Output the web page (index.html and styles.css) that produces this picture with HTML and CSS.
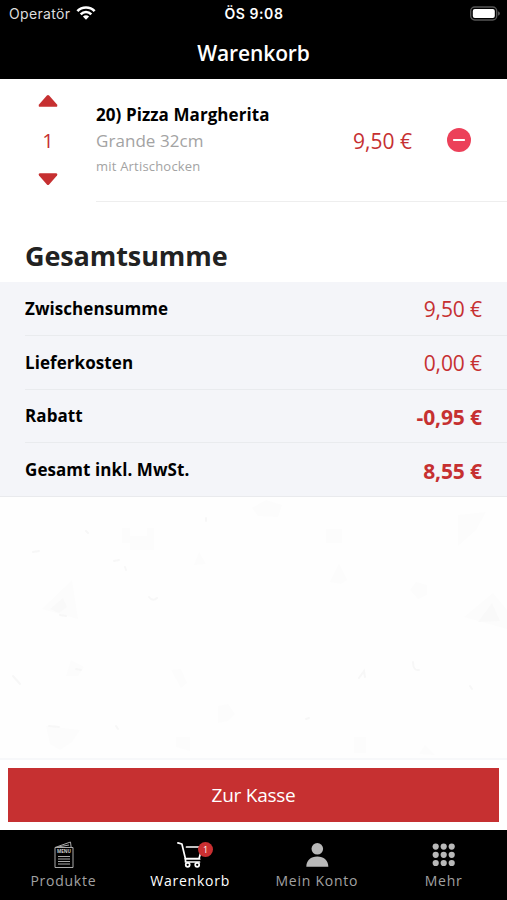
FILE: index.html
```html
<!DOCTYPE html>
<html lang="de">
<head>
<meta charset="utf-8">
<title>Warenkorb</title>
<link rel="stylesheet" href="styles.css">
</head>
<body>
<div class="app">
  <header class="top">
    <div class="status">
      <div class="carrier"><span>Operatör</span>
        <svg width="20" height="16" viewBox="0 0 20 16" fill="none" stroke="#fff" stroke-width="2.6"><path d="M1.4 5.2C6 .2 14 .2 18.6 5.2M4.7 8.4C7.7 5.2 12.3 5.2 15.3 8.4"/><path d="M10 13.8 6.9 10.6Q10 8 13.1 10.6Z" fill="#fff" stroke="none"/></svg>
      </div>
      <div class="clock">ÖS 9:08</div>
      <div class="battery">
        <svg width="32" height="16" viewBox="0 0 32 16"><rect x="1.7" y="1" width="26" height="13" rx="4" fill="none" stroke="#555" stroke-width="1.4"/><rect x="3.8" y="3" width="22" height="9" rx="2" fill="#fff"/><path d="M29 5.3q2 .7 2 2.2t-2 2.2z" fill="#555"/></svg>
      </div>
    </div>
    <h1 class="title">Warenkorb</h1>
  </header>
  <section class="item">
    <div class="stepper">
      <svg width="20" height="14" viewBox="0 0 20 14"><path d="M8.9 1.5Q10 .5 11.1 1.5L19 10.4Q20 12.5 18 12.8H2Q0 12.5 1 10.4Z" fill="#c63031"/></svg>
      <span class="qty">1</span>
      <svg width="20" height="14" viewBox="0 0 20 14"><path d="M8.9 12.5Q10 13.5 11.1 12.5L19 3.6Q20 1.5 18 1.2H2Q0 1.5 1 3.6Z" fill="#c63031"/></svg>
    </div>
    <div class="body">
      <div class="desc">
        <div class="name">20) Pizza Margherita</div>
        <div class="size">Grande 32cm</div>
        <div class="extra">mit Artischocken</div>
      </div>
      <div class="price">9,50 €</div>
      <svg class="remove" width="24" height="24" viewBox="0 0 24 24"><circle cx="12" cy="12" r="12" fill="#ec4059"/><path d="M6.8 12h10.4" stroke="#fff" stroke-width="1.8" stroke-linecap="round"/></svg>
    </div>
  </section>
  <h2 class="heading">Gesamtsumme</h2>
  <dl class="totals">
    <div class="row"><dt>Zwischensumme</dt><dd>9,50 €</dd></div>
    <div class="row"><dt>Lieferkosten</dt><dd>0,00 €</dd></div>
    <div class="row"><dt>Rabatt</dt><dd class="strong">-0,95 €</dd></div>
    <div class="row"><dt>Gesamt inkl. MwSt.</dt><dd class="strong">8,55 €</dd></div>
  </dl>
  <div class="backdrop">
    <svg width="507" height="262" viewBox="0 7 507 262" fill="#fcfcfc">
      <path d="M72 90 42 119 78 129ZM493 103 464 127 507 139V120ZM46 236 80 240 72 252 60 260 50 254ZM458 25 486 22 476 40 458 56ZM122 38h8v8h17v-8h7v22h-24v-7h-8ZM252 18l14-8 16 5-4 12-20-1ZM326 39h16v14h-16ZM330 92l9-18 8 16-6 4ZM410 100l6-8 11 3v10l-9 4ZM218 216l10-2 7 10-7 7-10 2ZM66 186l5-16 13 7-6 9ZM171 180l10-1 6 14-6 5ZM354 247h12v16h-12ZM176 247h14v14l-14-4ZM419 264l6-9 10 10ZM194 75l5-13 7 12Z"/>
      <g fill="none" stroke="#f7f7f7" stroke-width="2" stroke-linecap="round"><path d="M33 62l6-1M114 71l5-1M125 77l1 3M149 107q4 5 8 1M60 125l6 1M359 188l5-7 1 6M413 172q0 9 6 8M116 236l2 3M49 236l10 1M13 186l7 8M86 41l2 2M206 28v3M306 229l3-1M470 196l2 3M76 179l5 1"/></g>
      <path d="M50 119l13-11 4 9-8 6zM478 132l14-19 8 18z" fill="#f9f9f9"/>
    </svg>
  </div>
  <div class="checkout"><button class="pay" type="button">Zur Kasse</button></div>
  <nav class="tabs">
    <a class="tab">
      <svg width="26" height="30" viewBox="0 0 26 30" fill="none" stroke="#aaa" stroke-width="1"><path d="M5 8.5h18v20H5zM5 8.5 20.5 3l.6 5M8 8 19 6M8 17.5h12M8 20h12M8 22.5h12M8 25h12"/><text class="menu" x="14" y="14.3" text-anchor="middle">MENU</text></svg>
      <span>Produkte</span>
    </a>
    <a class="tab active">
      <span class="cart">
        <svg width="28" height="30" viewBox="0 0 28 30" fill="none" stroke="#fff" stroke-width="1.7" stroke-linecap="round" stroke-linejoin="round"><path d="M1.9 3.9 5.9 5 9.5 20H23.7M10.5 8H23.5M9 19.7H23L25.5 10.5M9.5 20V23H23.5"/><circle cx="11.7" cy="25.8" r="2"/><circle cx="21.2" cy="25.8" r="2"/></svg>
        <span class="badge">1</span>
      </span>
      <span>Warenkorb</span>
    </a>
    <a class="tab">
      <svg width="26" height="30" viewBox="0 0 26 30" fill="#b9b9b9"><circle cx="13.3" cy="9.8" r="5.8"/><path d="M2.3 27.7C2.3 21.5 6.8 17.5 13.3 17.5S24.3 21.5 24.3 27.7Z"/></svg>
      <span>Mein Konto</span>
    </a>
    <a class="tab">
      <svg width="26" height="30" viewBox="0 0 26 30" fill="#b9b9b9"><circle cx="4.7" cy="7.6" r="3.1"/><circle cx="12.7" cy="7.6" r="3.1"/><circle cx="20.7" cy="7.6" r="3.1"/><circle cx="4.7" cy="15.8" r="3.1"/><circle cx="12.7" cy="15.8" r="3.1"/><circle cx="20.7" cy="15.8" r="3.1"/><circle cx="4.7" cy="24" r="3.1"/><circle cx="12.7" cy="24" r="3.1"/><circle cx="20.7" cy="24" r="3.1"/></svg>
      <span>Mehr</span>
    </a>
  </nav>
</div>
</body>
</html>
```
FILE: styles.css
```css
* { box-sizing: border-box; margin: 0; padding: 0; }
body { font-family: "Open Sans", sans-serif; background: #fff; color: #000; }
.app { width: 507px; height: 900px; display: flex; flex-direction: column; overflow: hidden; }
svg { display: block; flex: none; }

.top { height: 79px; background: #000; color: #fff; flex: none; }
.status { height: 27px; display: grid; grid-template-columns: 1fr auto 1fr; align-items: center; padding: 0 6px 0 9px; font: 14px/27px Inter, sans-serif; }
.carrier { display: flex; align-items: center; gap: 6px; color: #ddd; letter-spacing: .35px; }
.clock { font-weight: 600; font-size: 14px; letter-spacing: .55px; margin: 0 1px 0 -1px; }
.battery { justify-self: end; }
.title { font-size: 21px; line-height: 52px; font-weight: 600; text-align: center; letter-spacing: -.1px; }

.item { height: 123px; flex: none; display: flex; }
.stepper { width: 96px; display: flex; flex-direction: column; align-items: center; padding-top: 15px; color: #c63031; }
.qty { font-size: 20px; line-height: 28px; margin: 19px 0 17px; }
.body { flex: 1; display: flex; align-items: center; border-bottom: 1px solid #eee; padding-right: 36px; }
.desc { flex: 1; }
.name { font-size: 17px; line-height: 26px; font-weight: 700; letter-spacing: .07px; }
.size { font-size: 17px; line-height: 26px; color: #a3a3a3; letter-spacing: .05px; }
.extra { font-size: 13px; line-height: 25px; color: #a3a3a3; letter-spacing: .2px; }
.price { font-size: 21px; color: #c63031; margin-right: 35px; padding-top: 2px; }

.heading { font-size: 27px; line-height: 54px; height: 80px; padding: 27px 0 0 25px; font-weight: 700; color: #222; flex: none; letter-spacing: -.1px; }
.totals { background: #f4f5f9; flex: none; height: 215px; display: flex; flex-direction: column; padding-left: 25px; border-bottom: 1px solid #e9eaed; }
.row { flex: 1; display: flex; justify-content: space-between; align-items: center; padding-right: 25px; border-bottom: 1px solid #e9ebee; }
.row:last-child { border-bottom: 0; }
.row dt { font-size: 17px; font-weight: 700; letter-spacing: .07px; }
.row dd { font-size: 21px; color: #c63031; padding-top: 2px; letter-spacing: -.1px; }
.row .strong { font-weight: 700; letter-spacing: -.1px; }

.backdrop { flex: 1; min-height: 0; background: #fefefe; }
.checkout { flex: none; height: 72px; padding: 8px 8px; border-top: 2px solid #f7f8fa; }
.pay { display: block; width: 491px; height: 54px; border: 0; background: #c63031; color: #fff; font: 19px "Open Sans", sans-serif; letter-spacing: -.25px; }

.tabs { flex: none; height: 70px; background: #000; display: flex; }
.tab { flex: 1; display: flex; flex-direction: column; align-items: center; padding-top: 9px; color: #a2a2a2; font-size: 14px; line-height: 24px; letter-spacing: .75px; }
.active { color: #fff; }
.cart { position: relative; }
.badge { position: absolute; left: 22px; top: 3px; width: 15px; height: 15px; border-radius: 50%; background: #c92f31; color: #fff; font-size: 9px; line-height: 15px; text-align: center; letter-spacing: 0; }
.menu { font: 700 4.6px "Open Sans", sans-serif; letter-spacing: 0; fill: #ccc; stroke: none; }
```
